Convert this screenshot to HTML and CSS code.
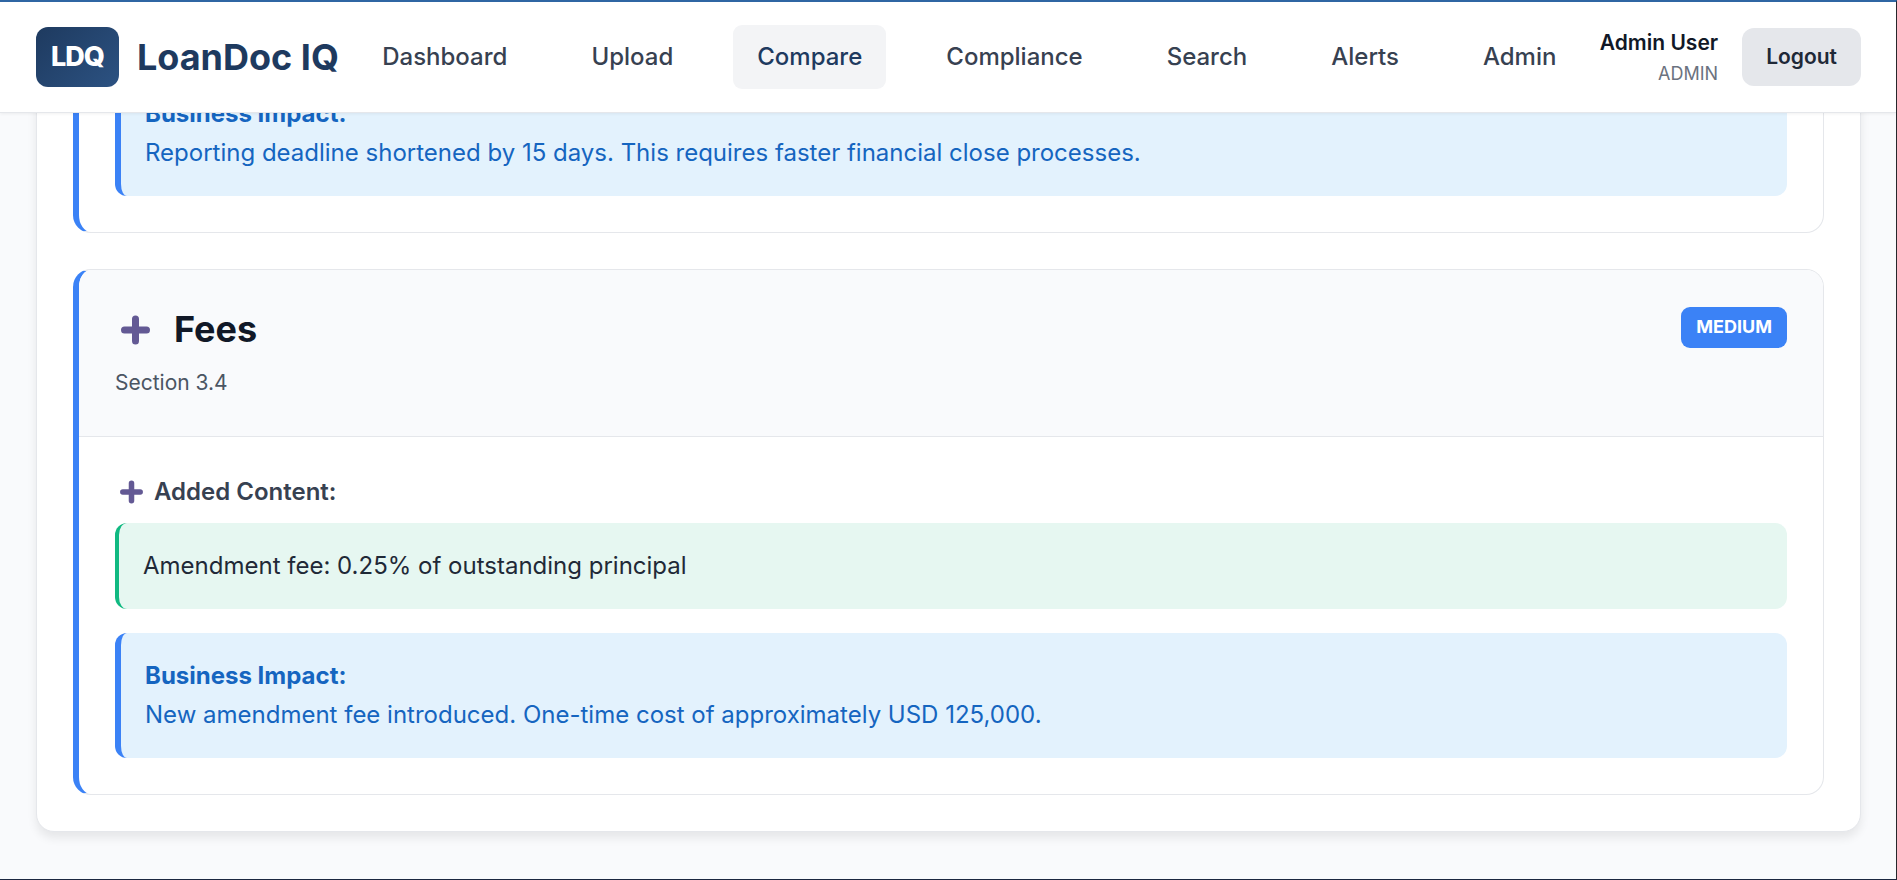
FILE: index.html
```html
<!DOCTYPE html>
<html lang="en">
<head>
    <meta charset="UTF-8">
    <meta name="viewport" content="width=device-width, initial-scale=1.0">
    <title>LoanDoc IQ - Compare</title>
    <link rel="stylesheet" href="styles.css">
</head>
<body>
    <div class="app">
        <header class="header">
            <div class="logo">
                <div class="logo-icon">LDQ</div>
                <span class="logo-text">LoanDoc IQ</span>
            </div>

            <nav class="nav">
                <a href="#" class="nav-link">Dashboard</a>
                <a href="#" class="nav-link">Upload</a>
                <a href="#" class="nav-link active">Compare</a>
                <a href="#" class="nav-link">Compliance</a>
                <a href="#" class="nav-link">Search</a>
                <a href="#" class="nav-link">Alerts</a>
                <a href="#" class="nav-link">Admin</a>
            </nav>

            <div class="user-menu">
                <div class="user-info">
                    <span class="user-name">Admin User</span>
                    <span class="user-role">ADMIN</span>
                </div>
                <button type="button" class="logout-btn">Logout</button>
            </div>
        </header>

        <main class="main">
            <div class="results">
                <article class="change">
                    <div class="change-body">
                        <div class="impact">
                            <strong>Business Impact:</strong>
                            <p>Reporting deadline shortened by 15 days. This requires faster financial close processes.</p>
                        </div>
                    </div>
                </article>

                <article class="change">
                    <div class="change-header">
                        <div>
                            <h3 class="change-title">
                                <svg class="plus" viewBox="0 0 38 38" aria-hidden="true">
                                    <path d="M19 9v22M8 20h22"/>
                                </svg>
                                Fees
                            </h3>
                            <p class="change-section">Section 3.4</p>
                        </div>
                        <span class="badge">MEDIUM</span>
                    </div>
                    <div class="change-body">
                        <h4 class="content-label">
                            <svg class="plus" viewBox="0 0 38 38" aria-hidden="true">
                                <path d="M19 8v22M8 19h22"/>
                            </svg>
                            Added Content:
                        </h4>
                        <div class="added">Amendment fee: 0.25% of outstanding principal</div>
                        <div class="impact">
                            <strong>Business Impact:</strong>
                            <p>New amendment fee introduced. One-time cost of approximately USD 125,000.</p>
                        </div>
                    </div>
                </article>
            </div>
        </main>
    </div>
</body>
</html>
```
FILE: styles.css
```css
* {
    margin: 0;
    padding: 0;
    box-sizing: border-box;
}

body {
    font-family: 'Inter', sans-serif;
    font-size: 24px;
    line-height: 38px;
    background: #f9fafc;
    color: #1f2937;
}

.app {
    height: 100vh;
    display: flex;
    flex-direction: column;
    overflow: hidden;
    border-top: 2px solid #2f66a3;
    border-right: 1px solid #26272b;
    border-bottom: 1px solid #1c2740;
}

/* Header */
.header {
    display: flex;
    flex-shrink: 0;
    align-items: center;
    justify-content: space-between;
    height: 111px;
    padding: 0 35px 0 36px;
    background: white;
    border-bottom: 1px solid #e5e7eb;
    box-shadow: 0 1px 3px rgba(0, 0, 0, 0.06);
    z-index: 10;
}

.logo {
    display: flex;
    align-items: center;
    gap: 18px;
}

.logo-icon {
    padding: 11px 15px;
    font-size: 27px;
    font-weight: 800;
    letter-spacing: -1px;
    color: white;
    background: linear-gradient(135deg, #1e3a5f 0%, #2c5282 100%);
    border-radius: 12px;
}

.logo-text {
    font-size: 36px;
    font-weight: 700;
    color: #1e3a5f;
}

.nav {
    display: flex;
    gap: 36px;
}

.nav-link {
    padding: 13px 24px;
    font-weight: 500;
    color: #374151;
    text-decoration: none;
    border-radius: 9px;
}

.nav-link:hover,
.nav-link.active {
    color: #1e3a5f;
    background: #f3f4f6;
}

.user-menu {
    display: flex;
    align-items: center;
    gap: 24px;
}

.user-info {
    display: flex;
    flex-direction: column;
    align-items: flex-end;
    padding-top: 2px;
    line-height: 31px;
}

.user-name {
    font-size: 21px;
    font-weight: 600;
    color: #111827;
}

.user-role {
    font-size: 18px;
    color: #6b7280;
}

.logout-btn {
    padding: 12px 24px;
    font-family: inherit;
    font-size: 21px;
    font-weight: 600;
    line-height: 34px;
    color: #1f2937;
    background: #e5e7eb;
    border: none;
    border-radius: 12px;
    cursor: pointer;
}

/* Comparison results, scrolled to the end */
.main {
    display: flex;
    flex: 1;
    flex-direction: column;
    justify-content: flex-end;
    min-height: 0;
    padding: 0 35px 47px 36px;
}

.results {
    display: flex;
    flex-direction: column;
    gap: 36px;
    padding: 36px;
    background: white;
    border: 1px solid #e5e7eb;
    border-radius: 18px;
    box-shadow: 0 6px 10px rgba(0, 0, 0, 0.08);
}

.change {
    background: white;
    border: 1px solid #e5e7eb;
    border-left: 6px solid #3b82f6;
    border-radius: 18px;
    overflow: hidden;
}

.change-header {
    display: flex;
    align-items: flex-start;
    justify-content: space-between;
    padding: 37px 36px 36px;
    background: #f9fafc;
    border-bottom: 1px solid #e5e7eb;
}

.change-title {
    display: flex;
    align-items: center;
    gap: 18px;
    font-size: 36px;
    line-height: 44px;
    font-weight: 700;
    color: #111827;
}

.plus {
    width: 41px;
    height: 38px;
    fill: none;
    stroke: #635994;
    stroke-width: 7;
    stroke-linecap: round;
}

.change-section {
    margin-top: 15px;
    font-size: 21px;
    line-height: 34px;
    color: #4b5563;
}

.badge {
    padding: 5px 15px 7px;
    font-size: 18px;
    line-height: 29px;
    font-weight: 700;
    color: white;
    background: #3b82f6;
    border-radius: 9px;
}

.change-body {
    padding: 36px;
}

.content-label {
    display: flex;
    align-items: center;
    gap: 6px;
    margin-bottom: 12px;
    font-size: 24px;
    font-weight: 600;
    color: #374151;
}

.content-label .plus {
    width: 33px;
    height: 30px;
}

.added {
    padding: 24px;
    color: #1f2937;
    background: #e6f7f1;
    border-left: 4px solid #10b981;
    border-radius: 12px;
}

.impact {
    margin-top: 24px;
    padding: 23px 24px 24px;
    line-height: 39px;
    color: #1565c0;
    background: #e3f2fd;
    border-left: 6px solid #3b82f6;
    border-radius: 12px;
}
```
